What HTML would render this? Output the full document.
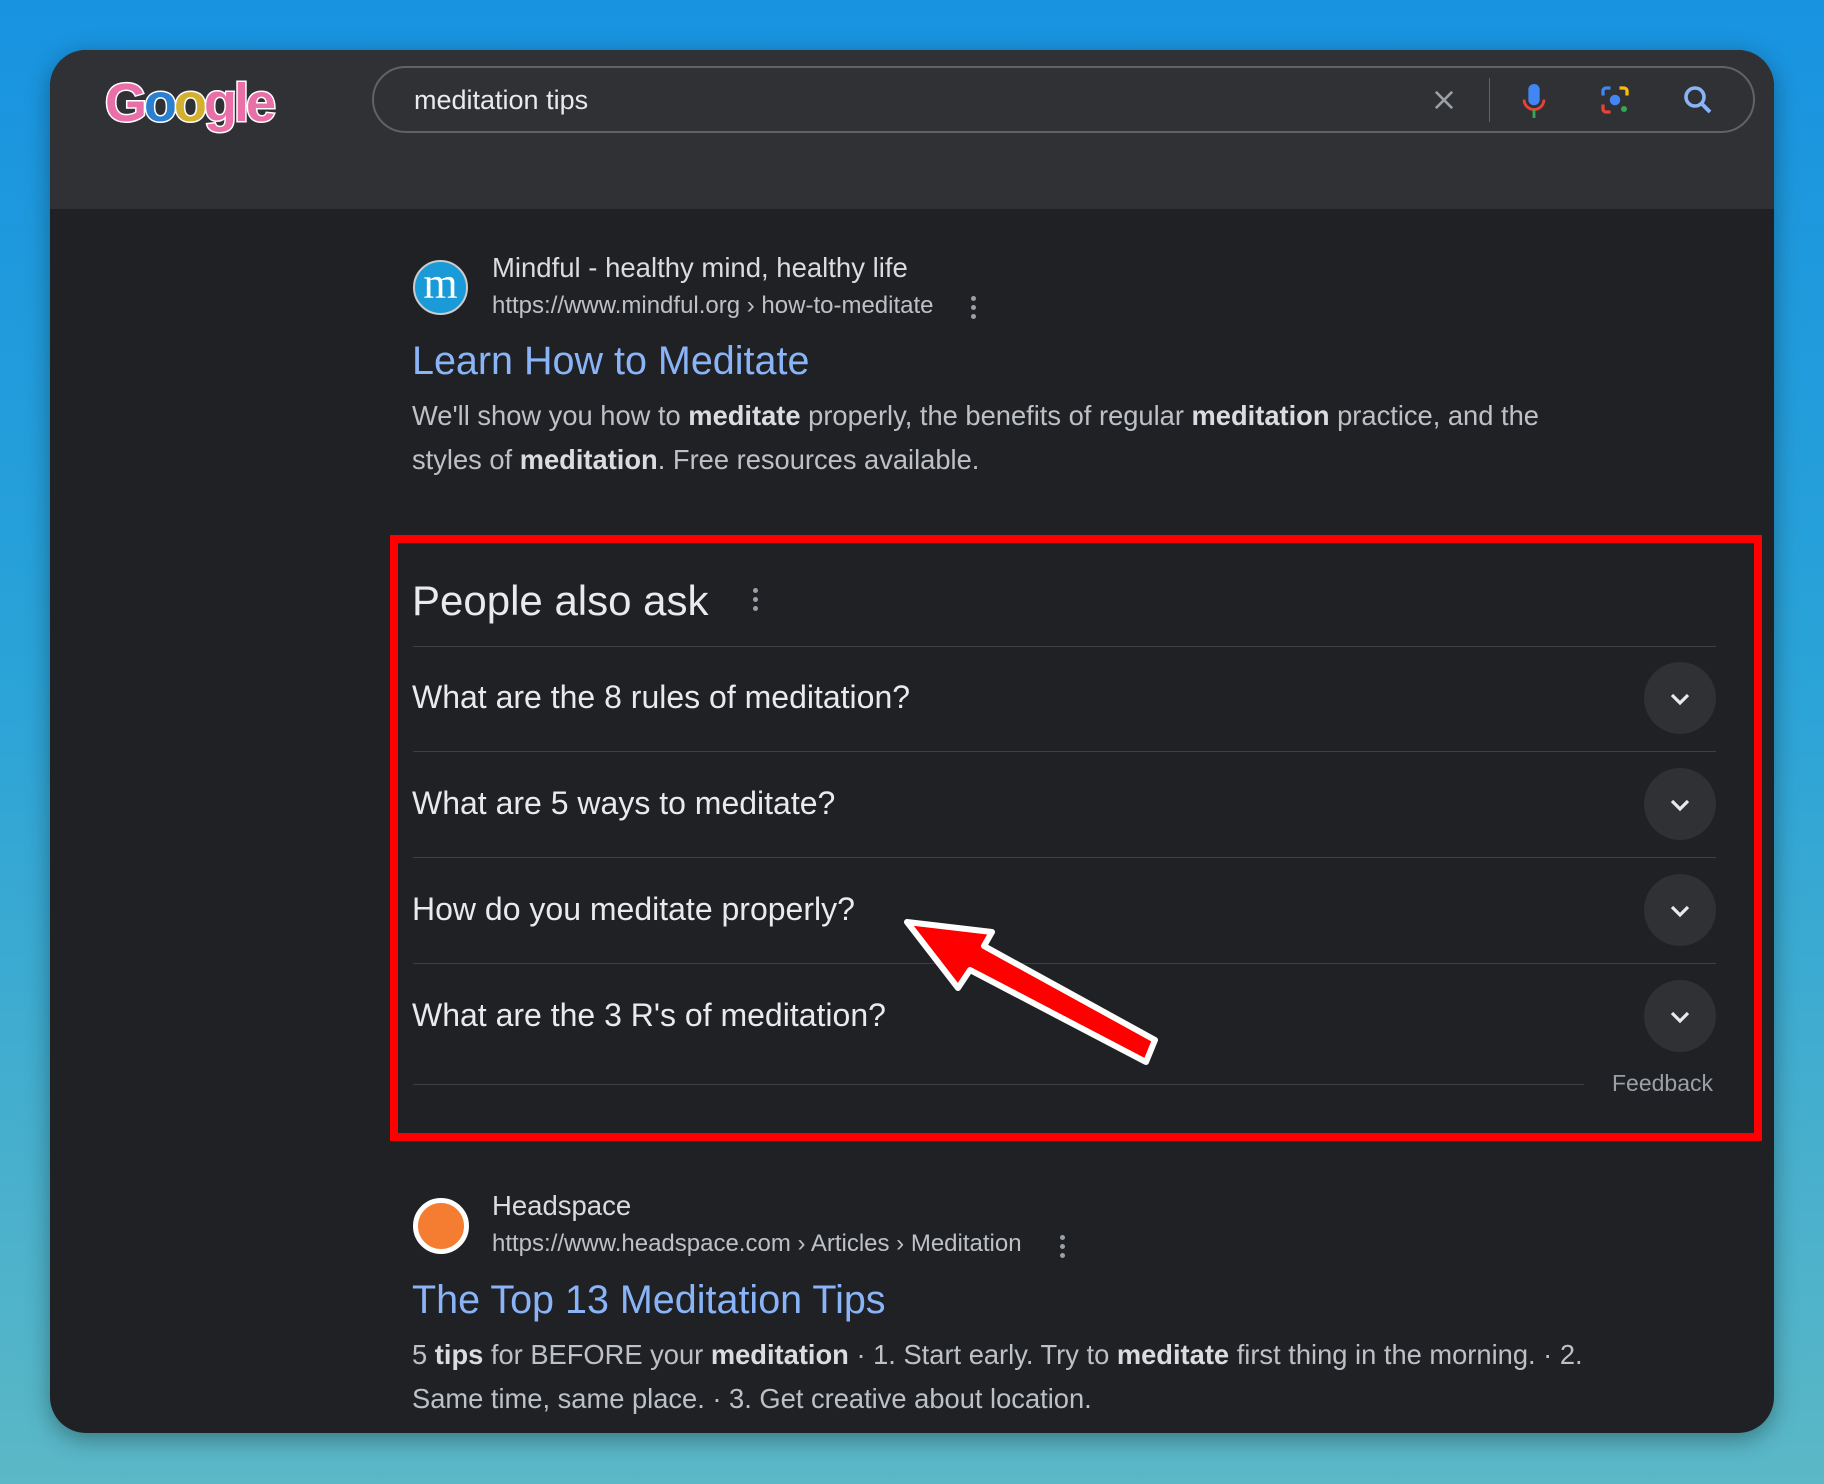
<!DOCTYPE html>
<html><head><meta charset="utf-8"><style>
*{margin:0;padding:0;box-sizing:border-box}
body{width:1824px;height:1484px;overflow:hidden;background:linear-gradient(180deg,#1893e0 0%,#2aa3d8 45%,#5bb8c6 100%);font-family:"Liberation Sans",Arial,sans-serif;position:relative}
.win{position:absolute;left:50px;top:50px;width:1724px;height:1383px;border-radius:36px;background:#202124;overflow:hidden;box-shadow:0 6px 24px rgba(0,0,0,.35)}
.hdr{position:absolute;left:0;top:0;width:100%;height:159px;background:#303134}
.search{position:absolute;left:322px;top:16px;width:1383px;height:67px;border:2px solid #5f6368;border-radius:34px;background:#303134}
.q{position:absolute;left:40px;top:17px;font-size:27px;color:#e8eaed}
.abs{position:absolute}
.t{position:absolute;white-space:nowrap}
.site{font-size:27.5px;color:#dadce0}
.url{font-size:24px;color:#bdc1c6}
.title{font-size:39.5px;color:#8ab4f8}
.snip{font-size:27.3px;color:#bdc1c6;line-height:44px}
.snip b{color:#dadce0}
.qq{font-size:32px;color:#e8eaed}
.div{position:absolute;height:1px;background:#3c4043}
.chev{position:absolute;width:72px;height:72px;border-radius:50%;background:#303134}
.dots{position:absolute;width:5px}
.dots i{display:block;width:5px;height:5px;border-radius:50%;background:#9aa0a6;margin-bottom:4px}
</style></head><body>
<div class="win">
<div class="hdr">
 <div class="t" style="left:55px;top:22px;font-size:54px;font-weight:bold;color:#e86fa8;letter-spacing:-3px;-webkit-text-stroke:3px #fff;paint-order:stroke">G<span style="color:#2a7fd0">o</span><span style="color:#d4b030">o</span>gle</div>
 <div class="search">
  <div class="q">meditation tips</div>
  <svg class="abs" style="left:1056px;top:18px" width="28" height="28" viewBox="0 0 24 24"><path d="M5 5L19 19M19 5L5 19" stroke="#9aa0a6" stroke-width="2.2"/></svg>
  <div class="abs" style="left:1115px;top:10px;width:1px;height:44px;background:#5f6368"></div>
  <svg class="abs" style="left:1143px;top:13px" width="34" height="40" viewBox="0 0 24 28"><rect x="8" y="2" width="8" height="15" rx="4" fill="#4285f4"/><path d="M5 13a7 7 0 0 0 14 0" stroke="#ea4335" stroke-width="2" fill="none"/><path d="M12 20v6" stroke="#34a853" stroke-width="2"/></svg>
  <svg class="abs" style="left:1223px;top:14px" width="36" height="36" viewBox="0 0 24 24"><path d="M4 9V6a2 2 0 0 1 2-2h3" stroke="#4285f4" stroke-width="2.2" fill="none"/><path d="M15 4h3a2 2 0 0 1 2 2v3" stroke="#fbbc04" stroke-width="2.2" fill="none"/><path d="M4 15v3a2 2 0 0 0 2 2h3" stroke="#ea4335" stroke-width="2.2" fill="none"/><circle cx="12" cy="12" r="3.5" fill="#4285f4"/><circle cx="18" cy="18" r="2" fill="#34a853"/></svg>
  <svg class="abs" style="left:1306px;top:14px" width="36" height="36" viewBox="0 0 24 24"><circle cx="10" cy="10" r="6" stroke="#8ab4f8" stroke-width="2.4" fill="none"/><path d="M14.5 14.5L20 20" stroke="#8ab4f8" stroke-width="2.6"/></svg>
 </div>
</div>

<!-- result 1 -->
<div class="abs" style="left:363px;top:210px;width:55px;height:55px;border-radius:50%;background:#1a9ad6;border:2px solid #ccc;color:#fff;font-family:'Liberation Serif',serif;font-size:44px;text-align:center;line-height:44px">m</div>
<div class="t site" style="left:442px;top:202px">Mindful - healthy mind, healthy life</div>
<div class="t url" style="left:442px;top:242px">https://www.mindful.org › how-to-meditate</div>
<div class="dots" style="left:921px;top:246px"><i></i><i></i><i></i></div>
<div class="t title" style="left:362px;top:289px">Learn How to Meditate</div>
<div class="t snip" style="left:362px;top:344px">We'll show you how to <b>meditate</b> properly, the benefits of regular <b>meditation</b> practice, and the<br>styles of <b>meditation</b>. Free resources available.</div>

<!-- PAA -->
<div class="t" style="left:362px;top:527px;font-size:42px;color:#e8eaed">People also ask</div>
<div class="dots" style="left:703px;top:538px"><i></i><i></i><i></i></div>
<div class="div" style="left:363px;top:596px;width:1303px"></div>
<div class="t qq" style="left:362px;top:629px">What are the 8 rules of meditation?</div>
<div class="div" style="left:363px;top:701px;width:1303px"></div>
<div class="t qq" style="left:362px;top:735px">What are 5 ways to meditate?</div>
<div class="div" style="left:363px;top:807px;width:1303px"></div>
<div class="t qq" style="left:362px;top:841px">How do you meditate properly?</div>
<div class="div" style="left:363px;top:913px;width:1303px"></div>
<div class="t qq" style="left:362px;top:947px">What are the 3 R's of meditation?</div>
<div class="div" style="left:363px;top:1034px;width:1171px"></div>
<div class="t" style="left:1562px;top:1020px;font-size:23px;color:#9aa0a6">Feedback</div>
<div class="chev" style="left:1594px;top:612px"></div>
<div class="chev" style="left:1594px;top:718px"></div>
<div class="chev" style="left:1594px;top:824px"></div>
<div class="chev" style="left:1594px;top:930px"></div>
<svg class="abs" style="left:1594px;top:612px" width="72" height="400" viewBox="0 0 72 400" fill="none" stroke="#e8eaed" stroke-width="3.2"><path d="M28 33l8 8 8-8"/><path d="M28 139l8 8 8-8"/><path d="M28 245l8 8 8-8"/><path d="M28 351l8 8 8-8"/></svg>

<!-- result 2 -->
<div class="abs" style="left:363px;top:1148px;width:56px;height:56px;border-radius:50%;background:#f47d31;border:5px solid #fff"></div>
<div class="t site" style="left:442px;top:1140px">Headspace</div>
<div class="t url" style="left:442px;top:1180px">https://www.headspace.com › Articles › Meditation</div>
<div class="dots" style="left:1010px;top:1185px"><i></i><i></i><i></i></div>
<div class="t title" style="left:362px;top:1228px">The Top 13 Meditation Tips</div>
<div class="t snip" style="left:362px;top:1283px">5 <b>tips</b> for BEFORE your <b>meditation</b> · 1. Start early. Try to <b>meditate</b> first thing in the morning. · 2.<br>Same time, same place. · 3. Get creative about location.</div>
</div>

<!-- red box -->
<div class="abs" style="left:390px;top:535px;width:1372px;height:606px;border:8px solid #f00"></div>
<svg class="abs" style="left:0;top:0" width="1824" height="1484"><polygon points="907,922 992,932 984,946 1155,1040 1146,1062 970,970 958,988" fill="#f00" stroke="#fff" stroke-width="6" stroke-linejoin="round"/></svg>
</body></html>
